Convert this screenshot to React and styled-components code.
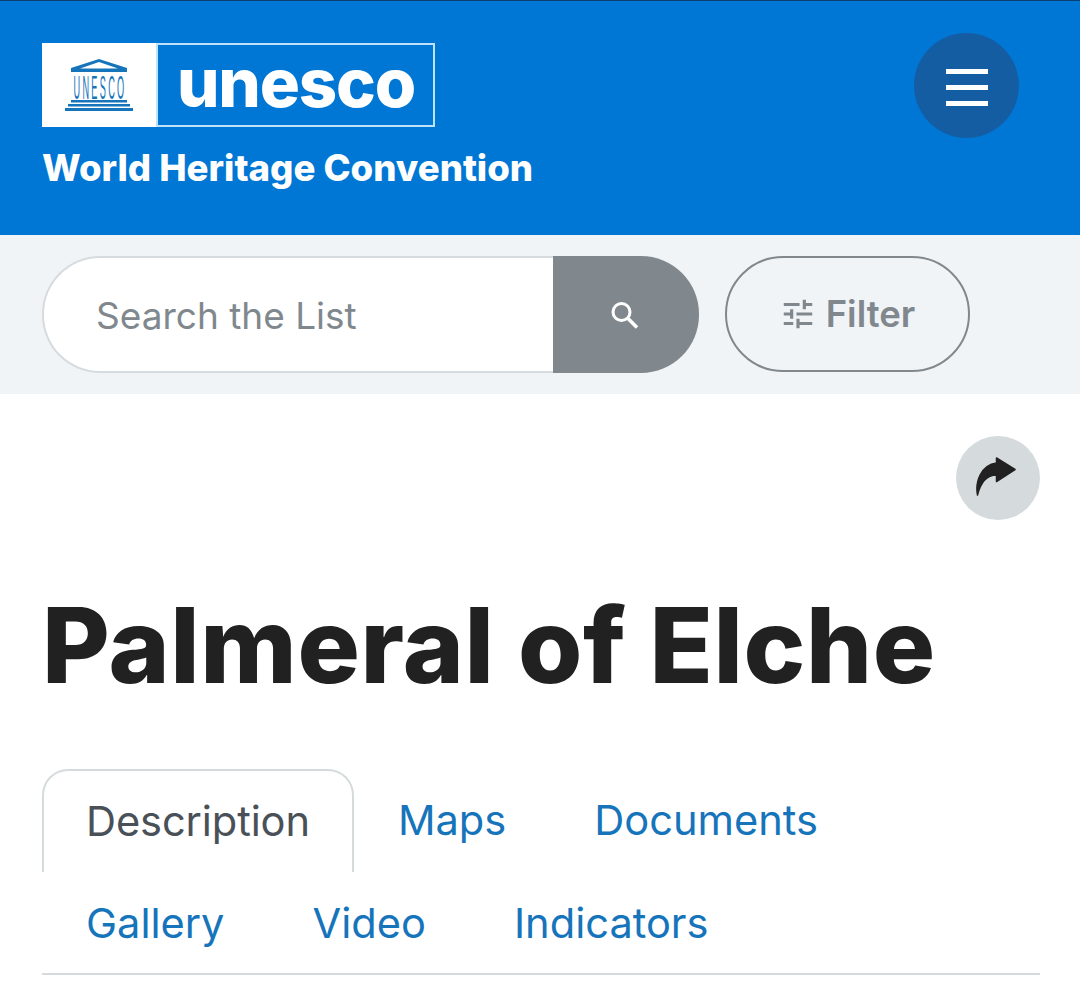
import React from "react"
import styled, { createGlobalStyle } from "styled-components"

const GlobalStyle = createGlobalStyle`
  html, body {
    margin: 0;
    padding: 0;
    background: #fff;
    font-family: Inter, "Liberation Sans", sans-serif;
  }
  #root {
    height: 995px;
    overflow: hidden;
  }
`

const Header = styled.header`
  height: 235px;
  box-sizing: border-box;
  background: #0077d4;
  border-top: 1px solid #0b3f70;
  padding: 32px 61px 0 42px;
  display: flex;
  justify-content: space-between;
  align-items: flex-start;
`

const Brand = styled.div`
  display: flex;
  flex-direction: column;
  align-items: flex-start;
  padding-top: 10px;
`

const Logo = styled.div`
  width: 393px;
  height: 84px;
  display: flex;
`

const LogoMark = styled.div`
  width: 114px;
  flex: none;
  background: #fff;
  display: flex;
  align-items: center;
  justify-content: center;
`

const LogoWord = styled.div`
  flex: 1;
  box-sizing: border-box;
  background: #0077d4;
  border: 2px solid #bfe3fb;
  color: #fff;
  font-size: 67px;
  font-weight: 800;
  line-height: 76px;
  padding-left: 19px;
  letter-spacing: -1.2px;
  white-space: nowrap;
`

const BrandName = styled.div`
  margin-top: 20px;
  color: #fff;
  font-size: 36.6px;
  line-height: 42px;
  font-weight: 800;
`

const MenuButton = styled.button`
  width: 105px;
  height: 105px;
  border: none;
  border-radius: 50%;
  background: #145da3;
  display: flex;
  flex-direction: column;
  align-items: center;
  justify-content: center;
  gap: 11px;
  padding: 4px 0 0;
`

const MenuBar = styled.span`
  width: 42px;
  height: 5px;
  background: #fff;
`

const SearchBand = styled.div`
  height: 159px;
  box-sizing: border-box;
  background: #f0f4f7;
  padding: 21px 0 0 42px;
  display: flex;
  align-items: flex-start;
  gap: 26px;
`

const SearchForm = styled.div`
  width: 657px;
  height: 117px;
  display: flex;
`

const SearchField = styled.div`
  flex: 1;
  box-sizing: border-box;
  background: #fff;
  border: 2px solid #d5dbde;
  border-right: none;
  border-radius: 58px 0 0 58px;
  padding: 1px 0 0 52px;
  display: flex;
  align-items: center;
  color: #80888e;
  font-size: 37px;
`

const SearchButton = styled.button`
  width: 146px;
  border: none;
  border-radius: 0 58px 58px 0;
  background: #80888e;
  display: flex;
  align-items: center;
  justify-content: center;
  padding: 0 2px 0 0;
`

const FilterButton = styled.button`
  width: 245px;
  height: 116px;
  box-sizing: border-box;
  border: 2px solid #80888e;
  border-radius: 58px;
  background: transparent;
  color: #80888e;
  font-family: inherit;
  font-size: 36.5px;
  font-weight: 600;
  display: flex;
  align-items: center;
  justify-content: center;
  gap: 9px;
  padding: 0 1px 0 0;
`

const Main = styled.main`
  padding: 0 40px 0 42px;
`

const ShareRow = styled.div`
  display: flex;
  justify-content: flex-end;
  padding-top: 42px;
`

const ShareButton = styled.button`
  width: 84px;
  height: 84px;
  border: none;
  border-radius: 50%;
  background: #d5dadc;
  display: flex;
  align-items: center;
  justify-content: center;
  padding: 0;
`

const Title = styled.h1`
  margin: 60px 0 0;
  color: #212121;
  font-size: 104px;
  line-height: 130px;
  font-weight: 800;
  letter-spacing: 0.6px;
`

const Tabs = styled.nav`
  display: flex;
  flex-wrap: wrap;
  margin-top: 59px;
  padding-bottom: 1px;
  border-bottom: 2px solid #d5dadc;
`

const Tab = styled.a`
  box-sizing: border-box;
  height: ${props => (props.$active ? "103px" : "100px")};
  padding: ${props => (props.$active ? "0 42px 2px" : "2px 44px 0")};
  display: flex;
  align-items: center;
  font-size: 41.6px;
  letter-spacing: ${props => (props.$active ? "-0.1px" : "0")};
  color: ${props => (props.$active ? "#495057" : "#1674bb")};
  border: ${props => (props.$active ? "2px solid #d5dadc" : "none")};
  border-bottom: none;
  border-radius: ${props => (props.$active ? "26px 26px 0 0" : "0")};
`

const TABS = ["Description", "Maps", "Documents", "Gallery", "Video", "Indicators"]

const TempleIcon = () => (
  <svg width="68" height="52" viewBox="0 0 68 52" fill="#1674bb">
    <path d="M34 0 L62 9 V13 H6 V9 Z M34 3 L15 9.5 H53 Z" fillRule="evenodd" />
    <g transform="translate(8.5 40) scale(0.27 1)">
      <text x="0" y="0" textLength="188" lengthAdjust="spacing" fontFamily="Liberation Sans, sans-serif" fontSize="34">
        UNESCO
      </text>
    </g>
    <rect x="6" y="41" width="56" height="2.5" />
    <rect x="3" y="45" width="62" height="2.5" />
    <rect x="0" y="49" width="68" height="3" />
  </svg>
)

const SearchIcon = () => (
  <svg width="30" height="30" viewBox="0 0 30 30" fill="none" stroke="#fff" strokeWidth="3">
    <circle cx="11.5" cy="12" r="8.5" />
    <path d="M18 18.5 L27 27.5" strokeWidth="3.6" />
  </svg>
)

const SlidersIcon = () => (
  <svg width="38" height="38" viewBox="0 0 24 24" fill="#80888e">
    <path d="M3 17v2h6v-2H3zM3 5v2h10V5H3zm10 16v-2h8v-2h-8v-2h-2v6h2zM7 9v2H3v2h4v2h2V9H7zm14 4v-2H11v2h10zm-6-4h2V7h4V5h-4V3h-2v6z" />
  </svg>
)

// viewBox is the button's own area in page pixels, so the arrow sits a bit up and left like the reference
const ShareIcon = () => (
  <svg width="44" height="44" viewBox="976 456 44 44" fill="#212121">
    <path
      d="M996.5 458 L1015 469.5 L996.5 481.5 V475 C988 475 981 481 977.5 495 C975 482 981 465 996.5 463 Z"
      stroke="#212121"
      strokeWidth="1.5"
      strokeLinejoin="round"
    />
  </svg>
)

export default function App() {
  return (
    <>
      <GlobalStyle />
      <Header>
        <Brand>
          <Logo>
            <LogoMark>
              <TempleIcon />
            </LogoMark>
            <LogoWord>unesco</LogoWord>
          </Logo>
          <BrandName>World Heritage Convention</BrandName>
        </Brand>
        <MenuButton>
          <MenuBar />
          <MenuBar />
          <MenuBar />
        </MenuButton>
      </Header>
      <SearchBand>
        <SearchForm>
          <SearchField>Search the List</SearchField>
          <SearchButton>
            <SearchIcon />
          </SearchButton>
        </SearchForm>
        <FilterButton>
          <SlidersIcon />
          Filter
        </FilterButton>
      </SearchBand>
      <Main>
        <ShareRow>
          <ShareButton>
            <ShareIcon />
          </ShareButton>
        </ShareRow>
        <Title>Palmeral of Elche</Title>
        <Tabs>
          {TABS.map((tab, i) => (
            <Tab key={tab} $active={i === 0}>
              {tab}
            </Tab>
          ))}
        </Tabs>
      </Main>
    </>
  )
}
